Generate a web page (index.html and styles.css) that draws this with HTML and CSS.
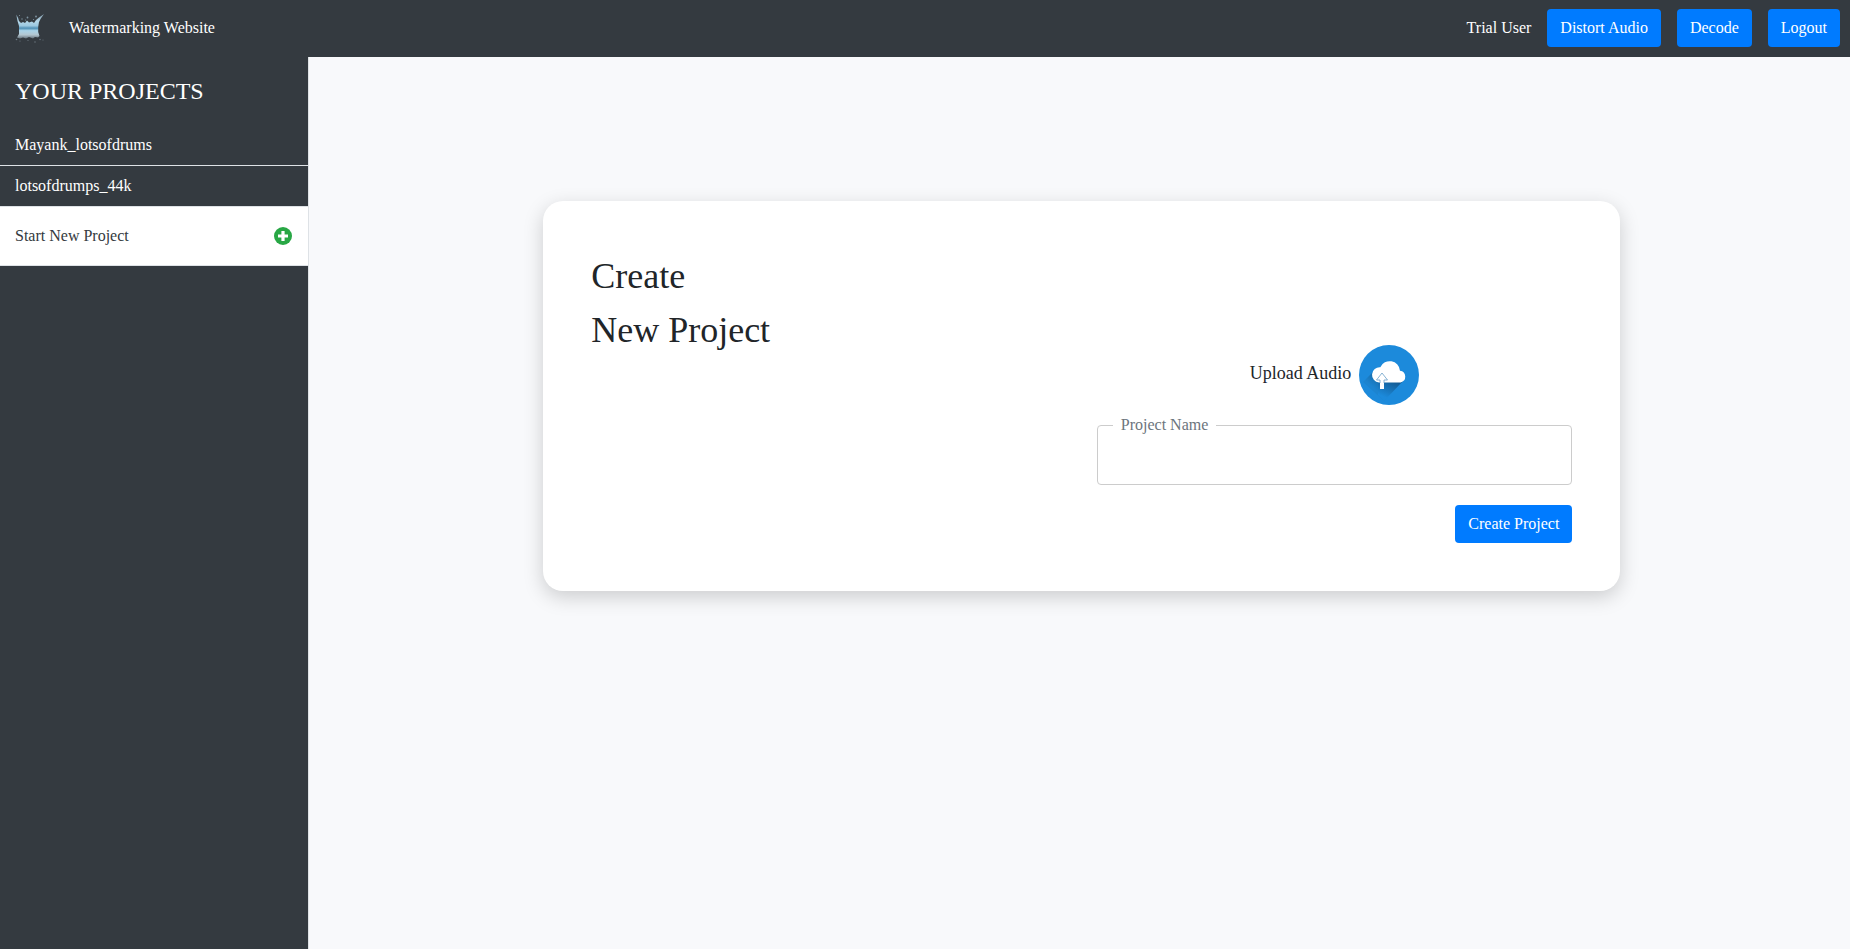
FILE: index.html
```html
<!DOCTYPE html>
<html lang="en">
<head>
<meta charset="utf-8">
<title>Watermarking Website</title>
<link rel="stylesheet" href="styles.css">
</head>
<body>
<header class="topbar">
  <a class="brand" href="#">
    <svg class="logo" viewBox="0 0 30 30" aria-hidden="true">
      <defs>
        <linearGradient id="water" x1="0" y1="0" x2="0" y2="1">
          <stop offset="0" stop-color="#8098a8"/>
          <stop offset=".3" stop-color="#b4d6e8"/>
          <stop offset=".48" stop-color="#9cc8e0"/>
          <stop offset=".58" stop-color="#4f8fb5"/>
          <stop offset=".68" stop-color="#a9d3e8"/>
          <stop offset=".85" stop-color="#b3c6d0"/>
          <stop offset="1" stop-color="#66727c"/>
        </linearGradient>
      </defs>
      <path fill="url(#water)" d="M1.200 1.500 3 4.500 4 8 6 10 8 9 10 10 12 7.500 14 9.500 17 8.500 19 10 21 7 24 4.500 29 1 25.500 6 24 9 23.200 14 23.200 19 24.500 23 23 24.500 20 24 18 25.500 14 24 11 25.500 8 24.500 5 25.500 2 24.500 4 21 4 13 2.500 8Z"/>
      <g fill="#9db9c8" opacity=".7">
        <circle cx="4.500" cy="2.500" r=".6"/><circle cx="7" cy="6" r=".7"/><circle cx="12.500" cy="4.500" r=".9"/>
        <circle cx="21" cy="3.500" r=".9"/><circle cx="18.500" cy="6.500" r=".6"/><circle cx="10.500" cy="7" r=".6"/>
      </g>
      <g fill="#8796a0" opacity=".7">
        <circle cx="1.500" cy="26.500" r=".8"/><circle cx="5" cy="28" r=".6"/><circle cx="13" cy="27.500" r=".6"/>
        <circle cx="20" cy="29" r=".7"/><circle cx="25" cy="26.500" r=".7"/><circle cx="28" cy="27" r=".5"/>
      </g>
    </svg>
    <span>Watermarking Website</span>
  </a>
  <nav class="actions">
    <span class="user">Trial User</span>
    <button class="btn" type="button">Distort Audio</button>
    <button class="btn" type="button">Decode</button>
    <button class="btn" type="button">Logout</button>
  </nav>
</header>
<div class="layout">
  <aside class="sidebar">
    <h2 class="sidebar-title">YOUR PROJECTS</h2>
    <nav class="projects">
      <a class="project" href="#">Mayank_lotsofdrums</a>
      <a class="project" href="#">lotsofdrumps_44k</a>
      <a class="project project-new" href="#">
        <span>Start New Project</span>
        <svg class="plus" viewBox="0 0 18 18" aria-hidden="true">
          <circle cx="9" cy="9" r="9" fill="#28a745"/>
          <path d="M9 4v10M4 9h10" stroke="#fff" stroke-width="3.200"/>
        </svg>
      </a>
    </nav>
  </aside>
  <main class="main">
    <section class="card">
      <h1 class="card-title">Create<br>New Project</h1>
      <form class="form">
        <button class="upload" type="button">
          <span class="upload-text">Upload Audio</span>
          <svg class="upload-icon" viewBox="0 0 60 60" aria-hidden="true">
            <defs>
              <linearGradient id="shadeRight" x1="38" y1="36" x2="30" y2="54" gradientUnits="userSpaceOnUse">
                <stop offset="0" stop-color="#12588f"/>
                <stop offset="1" stop-color="#1c8adb"/>
              </linearGradient>
              <linearGradient id="shadeLeft" x1="18" y1="32" x2="11" y2="40" gradientUnits="userSpaceOnUse">
                <stop offset="0" stop-color="#176ead"/>
                <stop offset="1" stop-color="#1c84d0"/>
              </linearGradient>
            </defs>
            <circle cx="30" cy="30" r="30" fill="#1c8adb"/>
            <path fill="url(#shadeLeft)" d="M14 27 4 37 25 56 30 50 22 34Z"/>
            <path fill="url(#shadeRight)" d="M19 36H44L25 56 19 50Z"/>
            <path fill="#fff" d="M20 37.500a7.600 7.600 0 0 1 1.300-15.200A10.300 10.300 0 0 1 41 25.700 6 6 0 0 1 41.600 37.500Z"/>
            <path fill="#fff" d="M21 34.500h4V44h-4Z"/>
            <path fill="#fff" stroke="#6aa0c8" stroke-width=".8" d="M21 38v-3h-3.500L23 28l5.500 7H25v3"/>
          </svg>
        </button>
        <div class="field">
          <label class="field-label" for="project-name">Project Name</label>
          <input class="field-input" id="project-name" type="text">
        </div>
        <button class="btn submit" type="submit">Create Project</button>
      </form>
    </section>
  </main>
</div>
</body>
</html>
```
FILE: styles.css
```css
*, *::before, *::after {
  box-sizing: border-box;
}

body {
  margin: 0;
  min-height: 100vh;
  display: flex;
  flex-direction: column;
  background: #f8f9fb;
  color: #212529;
  font-family: "Liberation Serif", "Times New Roman", serif;
  font-size: 16px;
  line-height: 24px;
}

a {
  color: inherit;
  text-decoration: none;
}

button,
input {
  font: inherit;
  color: inherit;
}

.topbar {
  display: flex;
  align-items: center;
  justify-content: space-between;
  padding: 9px 10px 10px 15px;
  background: #343a40;
  color: #fff;
}

.brand {
  display: flex;
  align-items: center;
  gap: 24px;
}

.logo {
  width: 30px;
  height: 30px;
}

.actions {
  display: flex;
  align-items: center;
  gap: 16px;
}

.btn {
  height: 38px;
  padding: 0 13px;
  border: 0;
  border-radius: 4px;
  background: #007bff;
  color: #fff;
  cursor: pointer;
}

.layout {
  flex: 1;
  display: flex;
}

.sidebar {
  flex: none;
  width: 16.7%;
  border-right: 1px solid #dee2e6;
  background: #343a40;
  color: #fff;
}

.sidebar-title {
  margin: 0;
  padding: 16px 15px;
  font-size: 24px;
  font-weight: 400;
  line-height: 36px;
}

.project {
  display: block;
  padding: 8px 15px;
  border-bottom: 1px solid #dee2e6;
}

.project-new {
  display: flex;
  align-items: center;
  justify-content: space-between;
  padding: 17px 16px 17px 15px;
  background: #fff;
  color: #343a40;
}

.plus {
  width: 18px;
  height: 18px;
}

.main {
  flex: 1;
}

.card {
  display: grid;
  grid-template-columns: 1fr 1fr;
  gap: 30px;
  width: 69.9%;
  margin: 144px 0 48px 15.2%;
  padding: 48px;
  border-radius: 20px;
  background: #fff;
  box-shadow: 0 6px 20px rgba(0, 0, 0, 0.18);
}

.card-title {
  margin: 0;
  font-size: 36px;
  font-weight: 400;
  line-height: 54px;
}

.form {
  display: flex;
  flex-direction: column;
  gap: 20px;
  padding-top: 96px;
}

.upload {
  display: flex;
  align-items: center;
  align-self: center;
  gap: 8px;
  padding: 0;
  border: 0;
  background: none;
  font-size: 18px;
  cursor: pointer;
}

.upload-text {
  padding-bottom: 4px;
}

.upload-icon {
  width: 60px;
  height: 60px;
}

.field {
  position: relative;
}

.field-label {
  position: absolute;
  top: -12px;
  left: 16px;
  padding: 0 8px;
  background: #fff;
  color: #6c757d;
}

.field-input {
  display: block;
  width: 100%;
  height: 60px;
  padding: 12px 16px;
  border: 1px solid #ccc;
  border-radius: 4px;
  background: none;
}

.submit {
  align-self: flex-end;
}
```
